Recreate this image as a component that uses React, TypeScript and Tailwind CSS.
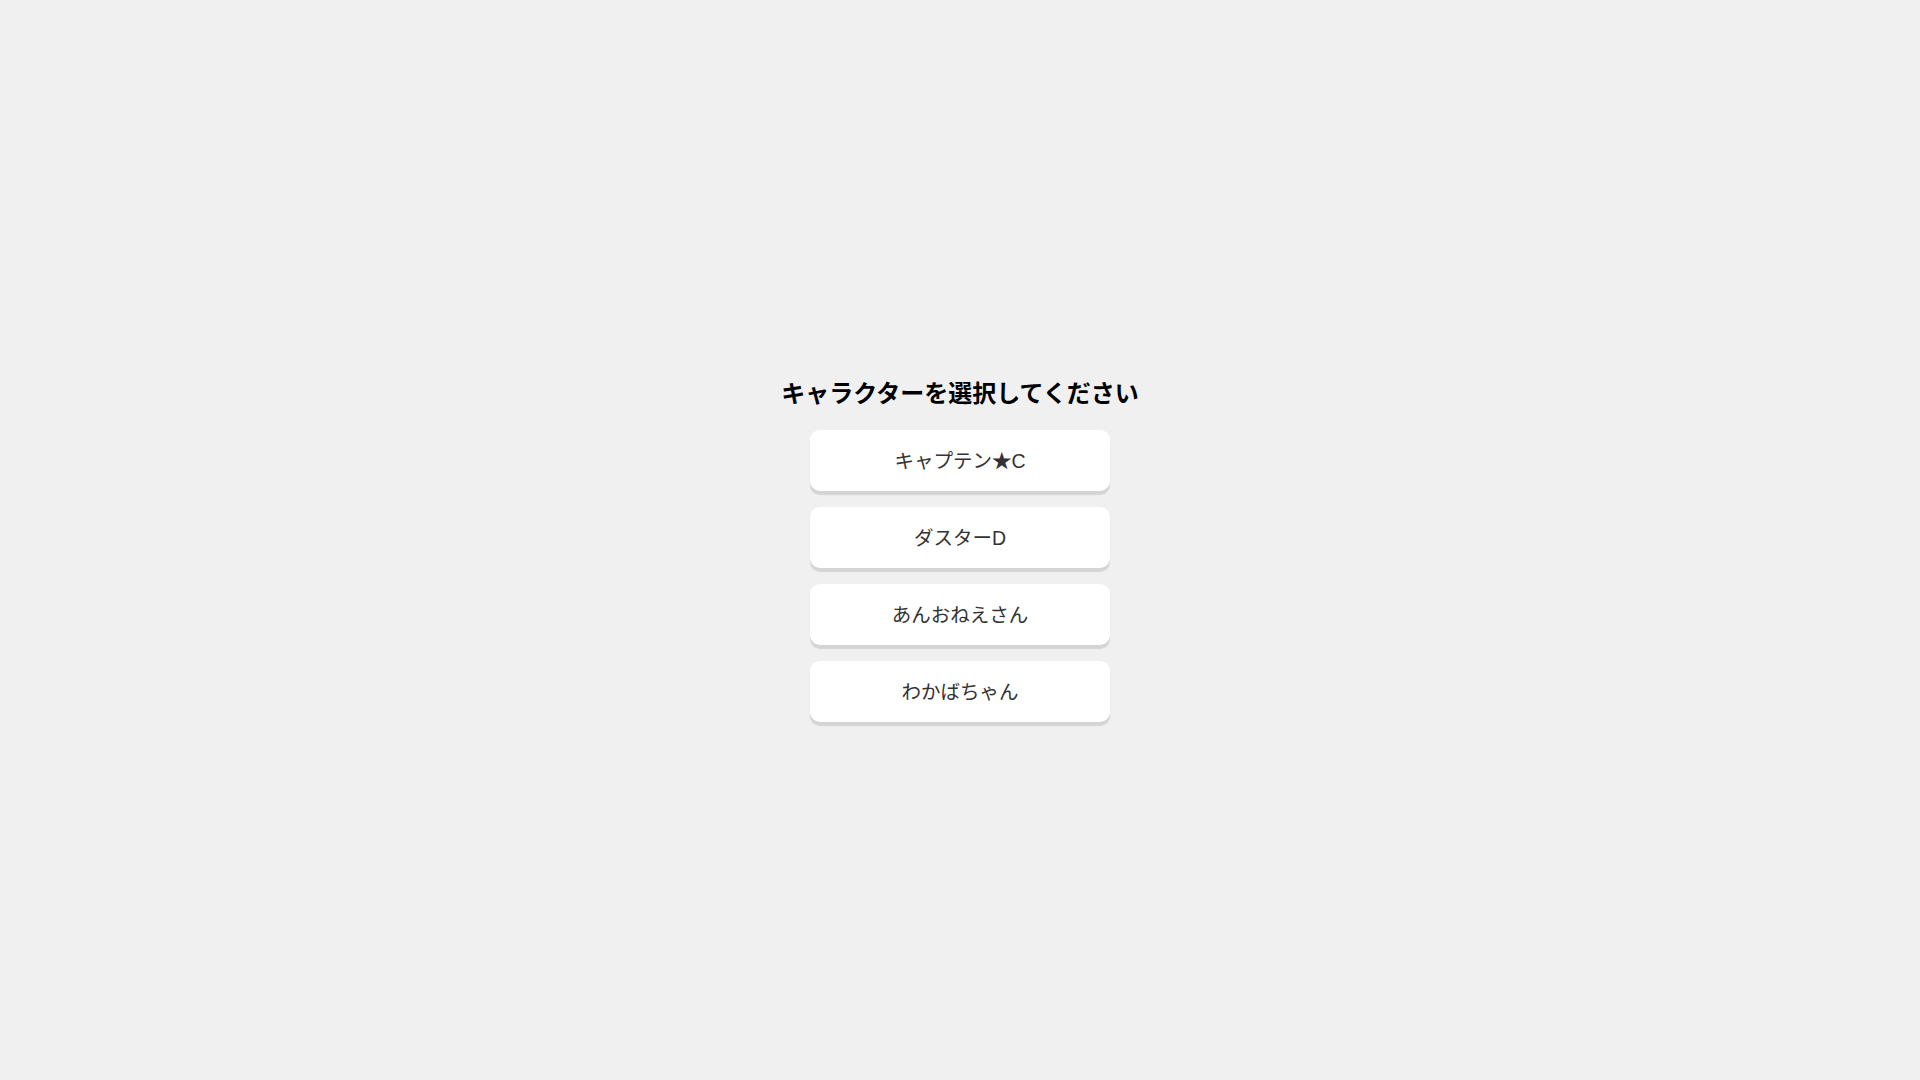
import React from "react";

const characters = ["キャプテン★C", "ダスターD", "あんおねえさん", "わかばちゃん"];

function App() {
  return (
    <div
      className="min-h-screen bg-[#f0f0f0] flex flex-col items-center justify-center pt-[17px]"
      style={{ fontFamily: '"Liberation Sans", "Noto Sans CJK JP", sans-serif' }}
    >
      <h1 className="text-[24px] leading-[36px] font-bold text-black mb-[18px]">
        キャラクターを選択してください
      </h1>
      <div className="flex flex-col gap-[16px]">
        {characters.map((name) => (
          <button
            key={name}
            className="w-[300px] h-[61px] pt-[3px] rounded-[10px] bg-white text-[19.5px] text-[#333333] shadow-[0_4px_1px_#d4d4d4]"
          >
            {name}
          </button>
        ))}
      </div>
    </div>
  );
}

export default App;
